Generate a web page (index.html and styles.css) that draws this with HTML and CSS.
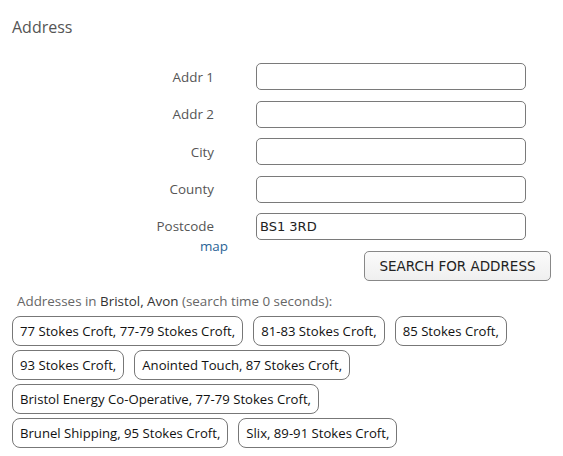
FILE: index.html
```html
<!DOCTYPE html>
<html>
<head>
<meta charset="utf-8">
<link rel="stylesheet" href="styles.css">
</head>
<body>
<div class="page">
  <h2 class="title">Address</h2>
  <div class="form">
    <label class="lbl">Addr 1</label><input class="field" type="text">
    <label class="lbl">Addr 2</label><input class="field" type="text">
    <label class="lbl">City</label><input class="field" type="text">
    <label class="lbl">County</label><input class="field" type="text">
    <div class="lbl pc">Postcode<a class="map" href="#">map</a></div><input class="field" type="text" value="BS1 3RD">
  </div>
  <div class="btnrow"><button class="search">SEARCH FOR ADDRESS</button></div>
  <div class="results">Addresses in <span class="place">Bristol, Avon</span> (search time 0 seconds):</div>
  <div class="chips">
    <span class="chip">77 Stokes Croft, 77-79 Stokes Croft,</span>
    <span class="chip">81-83 Stokes Croft,</span>
    <span class="chip">85 Stokes Croft,</span>
    <span class="chip">93 Stokes Croft,</span>
    <span class="chip">Anointed Touch, 87 Stokes Croft,</span>
    <span class="chip">Bristol Energy Co-Operative, 77-79 Stokes Croft,</span>
    <span class="chip">Brunel Shipping, 95 Stokes Croft,</span>
    <span class="chip">Slix, 89-91 Stokes Croft,</span>
  </div>
</div>
</body>
</html>
```
FILE: styles.css
```css
html, body {
  margin: 0;
  padding: 0;
  background: #fff;
}
.page {
  padding: 16px 12px 0 12px;
  font-family: "Open Sans", sans-serif;
  color: #555;
}
.title {
  margin: 0;
  font-size: 16px;
  font-weight: normal;
  line-height: 22px;
  color: #555;
}
.form {
  display: grid;
  grid-template-columns: 202px 270px;
  column-gap: 42px;
  row-gap: 10.5px;
  margin-top: 25px;
  align-items: center;
}
.lbl {
  font-size: 13.4px;
  text-align: right;
  color: #555;
}
.pc {
  align-self: start;
  padding-top: 4px;
  line-height: 18px;
  display: flex;
  flex-direction: column;
  align-items: flex-end;
}
.map {
  color: #2a6496;
  text-decoration: none;
  margin-right: -14px;
  margin-top: 2px;
}
.field {
  box-sizing: border-box;
  width: 270px;
  height: 27px;
  margin: 0;
  border: 1px solid #7a7a7a;
  border-radius: 5px;
  padding: 0 3px;
  font-family: "DejaVu Sans", sans-serif;
  font-size: 13px;
  color: #222;
  background: #fff;
}
.pc + .field {
  align-self: start;
}
.btnrow {
  width: 539px;
  display: flex;
  justify-content: flex-end;
  margin-top: -4px;
}
.search {
  box-sizing: border-box;
  width: 187px;
  height: 30px;
  border: 1px solid #888;
  border-radius: 5px;
  background: linear-gradient(#fbfbfb, #efefef);
  font-family: "DejaVu Sans", sans-serif;
  font-size: 13.5px;
  color: #222;
  padding: 0;
}
.results {
  margin-top: 11px;
  padding-left: 5px;
  font-size: 13.4px;
  line-height: 18px;
  color: #666;
}
.place {
  color: #333;
}
.chips {
  display: flex;
  flex-wrap: wrap;
  gap: 4px 10px;
  margin-top: 6px;
  width: 530px;
}
.chip {
  box-sizing: border-box;
  height: 30px;
  display: inline-flex;
  align-items: center;
  padding: 0 7px;
  border: 1px solid #777;
  border-radius: 8px;
  font-size: 13.15px;
  color: #111;
}
```
